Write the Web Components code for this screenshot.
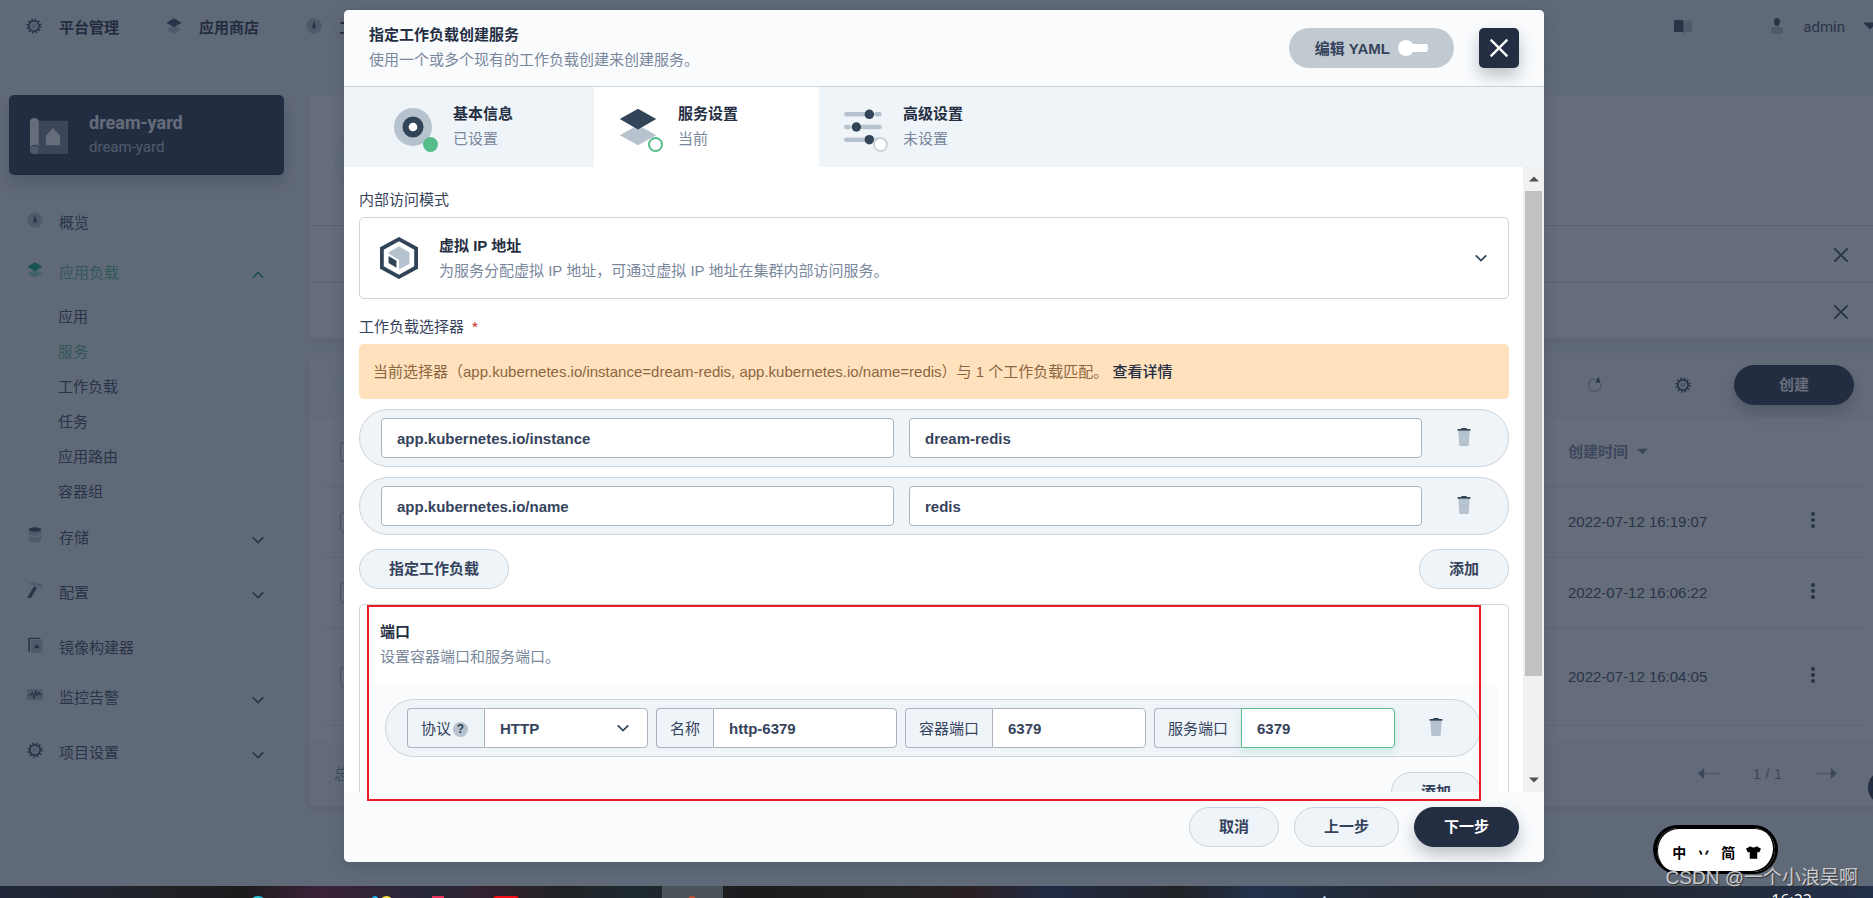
<!DOCTYPE html>
<html lang="zh-CN">
<head>
<meta charset="utf-8">
<title>KubeSphere - 服务</title>
<style>
html,body{height:100%;margin:0}
body{overflow:hidden;background:#eff4f9;font:15px/25px "Liberation Sans","Noto Sans CJK SC",sans-serif;color:#242e42}
</style>
</head>
<body>
<console-app></console-app>
<script>
const base = '*{box-sizing:border-box}button,input,select{font:inherit;color:inherit}a{color:inherit;text-decoration:none}';
function define(name, html) {
  customElements.define(name, class extends HTMLElement {
    constructor() {
      super();
      const markup = typeof html === 'function' ? html(this) : html;
      this.attachShadow({ mode: 'open' }).innerHTML = '<style>' + base + '</style>' + markup;
    }
  });
}
const attr = (el, n, d = '') => el.getAttribute(n) ?? d;

const D = 'var(--dark,#324558)', L = 'var(--light,#b6c2cd)';
const icons = {
  gear: `<circle cx="12" cy="12" r="9.7" fill="none" stroke="${D}" stroke-width="3.6" stroke-dasharray="2.3 2.78"/><circle cx="12" cy="12" r="7.6" fill="none" stroke="${D}" stroke-width="2.6"/><circle cx="12" cy="12" r="4" fill="${L}"/>`,
  layers: `<path d="M.5 17.2 12 10.8l11.5 6.4L12 23.6Z" fill="${L}"/><path d="M.5 7 12 .4 23.5 7 12 13.6Z" fill="${D}"/>`,
  gauge: `<circle cx="12" cy="12" r="11.6" fill="${L}"/><path d="M12 4 14.4 12.5a2.6 2.6 0 1 1-4.8 0Z" fill="${D}"/>`,
  database: `<path d="M2.500 4v6c0 4 19 4 19 0V4ZM2.500 12.500v7.500c0 4.500 19 4.500 19 0v-7.500c-2 3.200-17 3.200-19 0Z" fill="${L}"/><ellipse cx="12" cy="3.600" rx="9.500" ry="3.200" fill="${D}"/>`,
  hammer: `<path d="M3 3C6 .5 11-.5 15 1l5 2.500 2-1 1.500 4-3 3-3.500-3-6-1.500Z" fill="${L}"/><path d="m10.500 6.500 4.500 2L6 24H0Z" fill="${D}"/>`,
  image: `<path d="M6 4h17v20H6Z" fill="${L}"/><path d="M2 1h18v2H4.500v19H2ZM10 17l4.500-7 4.500 7Z" fill="${D}"/>`,
  monitor: `<rect y="3" width="24" height="17" rx="2" fill="${L}"/><path d="M2 12h4l2-4 2.500 8 2.500-10 2 7 3-5 1.500 3H22" fill="none" stroke="${D}" stroke-width="1.800"/>`,
  project: `<path d="M5 3h19v21H4Z" fill="${L}" opacity=".55"/><path d="M0 3a3 3 0 0 1 5.500 0v16c-3-1.500-5.500 0-5.500 2Z" fill="#fff"/><path d="M0 21.500a2.700 2.700 0 1 1 5.500 0L4 24H2a2.400 2.400 0 0 1-2-2.500Z" fill="${L}"/><path d="m14.500 7.500 4.500 5v6h-9v-6Z" fill="#fff"/>`,
  book: `<path d="M12 5h12v15H12Z" fill="${L}"/><path d="M0 4h11l1.500 1v17L11 20H0Z" fill="${D}"/>`,
  user: `<path d="M3 18c0-4 2-5 9-5s9 1 9 5v3q0 3-3 3H6q-3 0-3-3Z" fill="${L}"/><path d="M7.500 4.500c0-6 9-6 9 0C16.500 9 15 12 12 12S7.500 9 7.500 4.500Z" fill="${D}"/>`,
  refresh: `<path d="M20.500 9.500a9.300 9.300 0 1 1-7-6.400" fill="none" stroke="${L}" stroke-width="2.600"/><path d="M17.500-.5 20 8.500 12.500 8.200Z" fill="${D}"/>`,
  close: `<path d="M2 2 22 22M22 2 2 22" fill="none" stroke="${D}" stroke-width="2.800"/>`,
  down: `<path d="m3 7.500 9 9 9-9" fill="none" stroke="${D}" stroke-width="3"/>`,
  up: `<path d="m3 16.500 9-9 9 9" fill="none" stroke="${D}" stroke-width="3"/>`,
  caret: `<path d="M0 6h24L12 18Z" fill="${D}"/>`,
  more: `<g fill="${D}"><circle cx="12" cy="3" r="3"/><circle cx="12" cy="12" r="3"/><circle cx="12" cy="21" r="3"/></g>`,
  prev: `<path d="M4 12h20" stroke="${L}" stroke-width="2"/><path d="M0 12 7 5.500v13Z" fill="${D}"/>`,
  next: `<path d="M0 12h20" stroke="${L}" stroke-width="2"/><path d="M24 12 17 5.500v13Z" fill="${D}"/>`,
  trash: `<path d="M4.500 4h15l-1.200 18.500q0 1.500-2 1.500H7.700q-2 0-2-1.500Z" fill="${L}"/><path d="M3.500 1.300h5V0h7v1.300h5v2.200h-17Z" fill="${D}"/>`,
  disc: `<circle cx="12" cy="12" r="12" fill="${L}"/><circle cx="12" cy="12" r="4.700" fill="#fff" stroke="${D}" stroke-width="3.900"/>`,
  sliders: `<g stroke="${L}" stroke-width="2.800" stroke-linecap="round"><path d="M1.400 4h11.300M20.500 4h2M1.400 12h1.500M11.500 12h11M1.400 20h11.300M20.500 20h2"/></g><g fill="${D}"><circle cx="16" cy="4" r="3"/><circle cx="7.800" cy="12" r="3"/><circle cx="16" cy="20" r="3"/></g>`,
  cube: `<path d="M12 .1 22.800 6v12L12 23.900 1.200 18V6Z" fill="#fff" stroke="${D}" stroke-width="2.400"/><path d="m12 4.700 6.600 3.600v7.400L12 19.300v-6L5.400 9.200v-.9Z" fill="${L}"/><path d="m5.400 10.800 5 3v4.400l-5-3Z" fill="${D}"/>`,
  shirt: `<path d="M7 2q5 4 10 0l7 4-3 6-3-1v11H6V11l-3 1-3-6Z" fill="${D}"/>`
};
define('ks-icon', el => `<style>
:host{display:block;flex:none;width:${attr(el, 'size', 16)}px;height:${attr(el, 'size', 16)}px}
svg{display:block;width:100%;height:100%;overflow:visible}</style>
<svg viewBox="0 0 24 24" aria-hidden="true">${icons[attr(el, 'name')]}</svg>`);

define('ks-button', el => `<style>
:host{display:block;flex:none}
button{display:block;height:40px;width:100%;padding:0 28px 1px;border-radius:20px;font-weight:700;border:1px solid #ccd3db;background:#eff4f9;color:#36435c;white-space:nowrap}
:host([kind=primary]) button{border-color:#242e42;background:#242e42;color:#fff;box-shadow:0 8px 16px rgba(36,46,66,.28)}
</style><button type="button"><slot></slot></button>`);

define('top-bar', `<style>
:host{display:block}
header{display:flex;align-items:center;height:69px;padding:0 0 13px 26px;border-bottom:1px solid;border-image:linear-gradient(90deg,transparent 12%,#e3e9ef 30%,#e3e9ef 80%,transparent 95%) 1}
nav{display:flex;flex:1}
a{display:flex;gap:17px;align-items:center;white-space:nowrap;font-weight:700;color:#242e42}
nav a{min-width:140px}
ks-icon{margin-bottom:4px}
.doc{margin-right:77px}
button{display:flex;align-items:center;gap:18px;border:0;background:none;padding:0;font:15px/25px Roboto,sans-serif;color:#36435c;margin-right:-4px}
</style><header><nav aria-label="主导航">
<a href="#"><ks-icon name="gear"></ks-icon>平台管理</a>
<a href="#"><ks-icon name="layers"></ks-icon>应用商店</a>
<a href="#"><ks-icon name="gauge"></ks-icon>工作台</a></nav>
<a class="doc" href="#" aria-label="文档"><ks-icon name="book" size="18"></ks-icon></a>
<button type="button"><ks-icon name="user"></ks-icon>admin<ks-icon name="caret" size="14"></ks-icon></button></header>`);

define('nav-item', el => `<style>
:host{display:block}
a{display:flex;align-items:center;height:50px;padding:0 19px 2px 18px;color:#36435c}
:host([expand]) a{margin-bottom:5px}
:host([active]) a{color:#55bc8a;margin:0}
:host([active]){--dark:#00aa72;--light:#90e0c5}
span{flex:1;margin-left:16px}
.lead{margin-bottom:4px}.tail{margin:5px 0 0}
</style><a href="#"><ks-icon class="lead" name="${attr(el, 'icon')}"></ks-icon><span><slot></slot></span>${el.hasAttribute('active') ? '<ks-icon class="tail" name="up" size="14"></ks-icon>' : el.hasAttribute('expand') ? '<ks-icon class="tail" name="down" size="14"></ks-icon>' : ''}</a>`);

define('side-nav', `<style>
:host{display:block;flex:none;width:275px}
.card{display:flex;align-items:center;gap:21px;height:80px;padding:0 21px;border-radius:5px;background:#242e42;color:#b6c2cd;font-family:Roboto,sans-serif;box-shadow:0 8px 16px rgba(36,46,66,.25);margin-bottom:23px}
.card div{display:grid}
strong{font-size:18px;color:#fff}
ul{list-style:none;margin:0;padding:1px 0 4px 49px}
li{height:35px;line-height:35px;color:#36435c}
.on{color:#55bc8a}
</style>
<div class="card"><ks-icon name="project" size="38"></ks-icon><div><strong>dream-yard</strong><span>dream-yard</span></div></div>
<nav aria-label="项目导航">
<nav-item icon="gauge">概览</nav-item>
<nav-item icon="layers" active>应用负载</nav-item>
<ul><li><a href="#">应用</a></li><li class="on"><a href="#">服务</a></li><li><a href="#">工作负载</a></li><li><a href="#">任务</a></li><li><a href="#">应用路由</a></li><li><a href="#">容器组</a></li></ul>
<nav-item icon="database" expand>存储</nav-item>
<nav-item icon="hammer" expand>配置</nav-item>
<nav-item icon="image">镜像构建器</nav-item>
<nav-item icon="monitor" expand>监控告警</nav-item>
<nav-item icon="gear" expand>项目设置</nav-item></nav>`);

define('page-intro', `<style>
:host{display:block;border-radius:5px 0 0 5px;background:#fff;box-shadow:0 4px 8px rgba(36,46,66,.08)}
.hero{height:130px;padding:28px 25px}
.hero i{display:block;width:75px;height:75px;border-radius:50%;background:#eff4f9}
.tip{display:flex;align-items:center;justify-content:flex-end;height:57px;padding:2px 24px 0 0;border-top:1px solid #d5dce4}
.tip:last-child{height:56px}
button{border:0;background:none;padding:0}
</style><div class="hero"><i></i></div>
<div class="tip"><button type="button" aria-label="关闭"><ks-icon name="close"></ks-icon></button></div>
<div class="tip"><button type="button" aria-label="关闭"><ks-icon name="close"></ks-icon></button></div>`);

define('service-list', `<style>
:host{display:block;border-radius:5px 0 0 5px;background:#fff;box-shadow:0 4px 8px rgba(36,46,66,.1);overflow:hidden}
.bar{display:flex;align-items:center;justify-content:flex-end;height:65px;padding:0 19px 0 25px;background:#f9fbfd;border-bottom:1px solid #eff4f9}
.search{width:200px;height:40px;border-radius:20px;background:#eff4f9;margin:0 auto 0 0;border:0}
.bar button{border:0;background:none;padding:0;margin-right:72px}
.bar .gear{margin-right:43px}
.bar ks-button{width:120px}
.wrap{padding:0 9px 0 15px}
table{width:100%;border-collapse:collapse;table-layout:fixed}
th,td{padding:0;text-align:left;border-bottom:1px solid #e3e9ef;font-weight:400;color:#36435c}
th{font-weight:700;color:#79879c;height:68px}
td{height:71px}
.tall td{height:97px}
.time{width:230px}.act{width:66px}
.act button{display:grid;place-items:center;width:30px;height:30px;border:0;background:none;padding:0 0 3px}
input{appearance:none;display:block;width:20px;height:20px;margin:0 0 0 16px;border:1px solid #abb4be;border-radius:3px}
th span{display:flex;align-items:center;gap:9px;--dark:#79879c}
footer{display:flex;align-items:center;height:65px;margin-top:15px;padding:0 36px 0 25px;background:#f9fbfd;color:#79879c;--dark:#79879c}
footer p{margin:0 auto 0 0}
footer button{border:0;background:none;padding:0}
footer span{margin:0 34px}
</style>
<div class="bar"><input class="search" aria-label="搜索"><button type="button" aria-label="刷新"><ks-icon name="refresh"></ks-icon></button><button class="gear" type="button" aria-label="自定义列"><ks-icon name="gear"></ks-icon></button><ks-button kind="primary">创建</ks-button></div>
<div class="wrap"><table>
<thead><tr><th><input type="checkbox" aria-label="全选"></th><th class="time"><span>创建时间<ks-icon name="caret" size="11"></ks-icon></span></th><th class="act"></th></tr></thead>
<tbody>
<tr><td><input type="checkbox" aria-label="选择"></td><td>2022-07-12 16:19:07</td><td class="act"><button type="button" aria-label="更多"><ks-icon name="more"></ks-icon></button></td></tr>
<tr><td><input type="checkbox" aria-label="选择"></td><td>2022-07-12 16:06:22</td><td class="act"><button type="button" aria-label="更多"><ks-icon name="more"></ks-icon></button></td></tr>
<tr class="tall"><td><input type="checkbox" aria-label="选择"></td><td>2022-07-12 16:04:05</td><td class="act"><button type="button" aria-label="更多"><ks-icon name="more"></ks-icon></button></td></tr>
</tbody></table></div>
<footer><p>总</p><button type="button" aria-label="上一页"><ks-icon name="prev" size="21"></ks-icon></button><span>1 / 1</span><button type="button" aria-label="下一页"><ks-icon name="next" size="21"></ks-icon></button></footer>`);

define('step-tab', el => `<style>
:host{display:flex;width:225px;height:80px;padding:14px 25px;gap:21px;align-items:flex-start}
:host([state=current]){background:#fff}
.pic{position:relative;margin-top:7px}
i{position:absolute;right:-6px;bottom:-6px;width:15px;height:15px;border-radius:50%;background:#fff;border:2px solid #ccd3db}
:host([state=done]) i{background:#55bc8a;border-color:#55bc8a}
:host([state=current]) i{border-color:#55bc8a}
strong,span{display:block;white-space:nowrap}
span{color:#79879c}
</style><div class="pic"><ks-icon name="${attr(el, 'icon')}" size="38"></ks-icon><i></i></div>
<div><strong>${attr(el, 'label')}</strong><span><slot></slot></span></div>`);

const fieldCss = `input,select{appearance:none;flex:1;min-width:0;width:100%;height:40px;margin:0;padding:0 15px;border:1px solid #abb4be;border-radius:4px;background:#fff;font-weight:700;color:#36435c;outline:0}`;
const rowCss = `:host{display:flex;height:58px;padding:0 21px;align-items:center;border:1px solid #ccd3db;border-radius:29px;background:#eff4f9}
.del{display:grid;place-items:center;flex:none;width:40px;height:40px;border:0;background:none;padding:0 0 2px}`;

define('label-row', el => `<style>${rowCss}${fieldCss}
input{flex:1;margin-right:15px}.del{margin:0 3px 0 7px}</style>
<input aria-label="键" value="${attr(el, 'key')}"><input aria-label="值" value="${attr(el, 'value')}">
<button class="del" type="button" aria-label="删除"><ks-icon name="trash" size="18"></ks-icon></button>`);

define('port-row', `<style>${rowCss}${fieldCss}
:host{gap:8px}
label{display:flex;flex:1;min-width:0;height:40px}
label>span{display:flex;align-items:center;flex:none;padding:0 13px;border:1px solid #abb4be;border-right:0;border-radius:4px 0 0 4px;white-space:nowrap;color:#36435c}
input,select{border-radius:0 4px 4px 0}
.q{width:15px;height:15px;margin:2px 3px 0 2px;border-radius:50%;background:#b6c2cd;color:#324558;font-weight:700;font-size:12px;line-height:15px;text-align:center}
.sel{position:relative;flex:1;display:flex}
.sel ks-icon{position:absolute;right:18px;top:13px}
.focus{border-color:#55bc8a;box-shadow:0 4px 8px rgba(85,188,138,.2)}
.del{margin:0 3px 0 13px}
</style>
<label><span>协议<b class="q">?</b></span><div class="sel"><select><option>HTTP</option></select><ks-icon name="down" size="14"></ks-icon></div></label>
<label><span>名称</span><input value="http-6379"></label>
<label><span>容器端口</span><input value="6379"></label>
<label><span>服务端口</span><input class="focus" value="6379"></label>
<button class="del" type="button" aria-label="删除"><ks-icon name="trash" size="18"></ks-icon></button>`);

define('scroll-rail', `<style>
:host{display:flex;flex-direction:column;flex:none;width:21px;background:#f1f1f1;--dark:#505050}
button{display:grid;place-items:center;height:24px;border:0;padding:0;background:none}
.up ks-icon{rotate:180deg}
i{flex:0 0 84%;margin:0 2px;background:#c1c1c1}
.run{flex:1;display:flex;flex-direction:column}
</style><button class="up" type="button" aria-label="向上滚动"><ks-icon name="caret" size="10"></ks-icon></button><div class="run"><i></i></div><button type="button" aria-label="向下滚动"><ks-icon name="caret" size="10"></ks-icon></button>`);

define('service-form', `<style>
:host{display:block;flex:1;min-width:0;padding:20px 14px 0 15px;overflow:hidden}
.cap{display:block;color:#36435c;margin-bottom:5px}
.cap b{color:#ca2621;margin-left:8px;font-weight:400}
.mode{display:flex;align-items:center;gap:21px;width:100%;height:82px;padding:0 20px;margin-bottom:15px;border:1px solid #ccd3db;border-radius:5px;background:#fff;text-align:left}
.mode>span{flex:1}
.mode strong,.mode small{display:block;font-size:15px;line-height:25px;color:#242e42}
.mode small,.desc{color:#79879c}
.alert{margin:0 0 10px;padding:15px 14px;border-radius:5px;background:#ffe1be;color:#8d663e}
.alert a{color:#242e42;font-weight:500}
label-row{margin-bottom:10px}
.acts{display:flex;justify-content:space-between;margin:14px 0 15px}
.wide{width:150px}.std{width:90px}
.ports{border:1px solid #ccd3db;border-radius:5px;padding:14px 10px}
p{margin:0}
.head{padding:0 10px}
.list{margin-top:15px;padding:15px 17px 14px 15px;border-radius:5px;background:#f9fbfd}
.list ks-button{margin:15px 0 0 auto}
</style>
<span class="cap">内部访问模式</span>
<button class="mode" type="button" aria-haspopup="listbox"><ks-icon name="cube" size="38"></ks-icon><span><strong>虚拟 IP 地址</strong><small>为服务分配虚拟 IP 地址，可通过虚拟 IP 地址在集群内部访问服务。</small></span><ks-icon name="down" size="14"></ks-icon></button>
<span class="cap">工作负载选择器<b>*</b></span>
<p class="alert">当前选择器（app.kubernetes.io/instance=dream-redis, app.kubernetes.io/name=redis）与 1 个工作负载匹配。 <a href="#">查看详情</a></p>
<label-row key="app.kubernetes.io/instance" value="dream-redis"></label-row>
<label-row key="app.kubernetes.io/name" value="redis"></label-row>
<div class="acts"><ks-button class="wide">指定工作负载</ks-button><ks-button class="std">添加</ks-button></div>
<section class="ports"><div class="head"><strong>端口</strong><p class="desc">设置容器端口和服务端口。</p></div>
<div class="list"><port-row></port-row><ks-button class="std">添加</ks-button></div></section>`);

define('service-dialog', `<style>
:host{display:flex;flex-direction:column;position:relative;width:1200px;max-width:100%;height:100%;border-radius:5px;background:#fff;box-shadow:0 4px 16px rgba(36,46,66,.2)}
header{display:flex;align-items:center;gap:25px;height:77px;padding:0 25px;background:#f9fbfd;border-bottom:1px solid #ccd3db;border-radius:5px 5px 0 0}
header div{flex:1;padding-bottom:2px}
h1,p{margin:0;font-size:15px;line-height:25px}
p{color:#79879c}
.yaml{display:flex;align-items:center;gap:8px;height:40px;padding:0 26px;border-radius:20px;background:#c1c9d1;font-weight:700;color:#36435c}
.yaml input{appearance:none;position:relative;width:30px;height:16px;margin:0;border-radius:8px;background:linear-gradient(#fff,#fff) 8px 4px/22px 8px no-repeat}
.yaml input::before{content:"";position:absolute;left:0;top:0;width:16px;height:16px;border-radius:50%;background:#fff}
.close{display:grid;place-items:center;width:40px;height:40px;border:0;border-radius:5px;background:#242e42;--dark:#fff;box-shadow:0 8px 16px rgba(36,46,66,.28);padding:0}
.tabs{display:flex;padding-left:25px;background:#eff4f9}
.body{display:flex;flex:1;min-height:0}
footer{display:flex;justify-content:flex-end;gap:15px;padding:15px 25px;background:#f9fbfd;border-radius:0 0 5px 5px}
.s{width:90px}.m{width:105px}
.mark{position:absolute;left:23px;right:63px;bottom:61px;height:196px;border:2px solid #ed1c24;pointer-events:none}
</style>
<header><div><h1>指定工作负载创建服务</h1><p>使用一个或多个现有的工作负载创建来创建服务。</p></div>
<label class="yaml">编辑 YAML<input type="checkbox" role="switch"></label>
<button class="close" type="button" aria-label="关闭"><ks-icon name="close" size="20"></ks-icon></button></header>
<div class="tabs"><step-tab icon="disc" label="基本信息" state="done">已设置</step-tab><step-tab icon="layers" label="服务设置" state="current">当前</step-tab><step-tab icon="sliders" label="高级设置">未设置</step-tab></div>
<div class="body"><service-form></service-form><scroll-rail></scroll-rail></div>
<footer><ks-button class="s">取消</ks-button><ks-button class="m">上一步</ks-button><ks-button class="m" kind="primary">下一步</ks-button></footer>
<div class="mark"></div>`);

define('ime-badge', `<style>
:host{display:flex;align-items:center;justify-content:space-around;width:125px;height:49px;padding:4px 9px 0 10px;border:solid #000;border-width:3px 3px 2px 4px;border-radius:25px;background:#fff;box-shadow:inset -2px -1px 0 #000,inset 1px 1px 0 #000;color:#000;font:700 14px/20px "Noto Sans CJK SC",sans-serif;--dark:#000}
</style><span>中</span><span>丷</span><span>简</span><ks-icon name="shirt" size="15"></ks-icon>`);

define('task-bar', `<style>
:host{display:block;position:relative;height:12px;overflow:hidden;background:linear-gradient(90deg,#20273a,#202226 9%,#1c1c1e 13%,#3c2238 17%,#262838 23%,#33212f 26%,#202226 30%,#1e2a30 34%,#1c1c1e 40%,#232225 48%,#2a2024 52%,#222b45 56%,#202226 63%,#24324c 67%,#22262c 77%,#22262c 82%,#243049)}
i{position:absolute;top:10px;height:17px;border-radius:50%}
.win{top:0;height:12px;left:662px;width:61px;border-radius:0;background:#4b535b}
time{position:absolute;right:61px;top:4px;color:#fff;font:16px/20px "Open Sans",sans-serif}
</style><i class="win"></i>
<i style="left:249px;width:18px;background:#27c4dc"></i><i style="left:370px;width:10px;background:#1fb6e8"></i><i style="left:379px;width:15px;background:#f4e63c"></i><i style="left:432px;width:12px;background:#e8315b;border-radius:0"></i><i style="left:492px;width:28px;background:#f20d17;border-radius:5px"></i><i style="left:686px;width:12px;background:#d34b32"></i><i style="left:1322px;width:5px;background:#b9d6ee"></i><time>16:22</time>`);

define('console-app', `<style>
:host{display:flex;flex-direction:column;height:100vh;position:relative;overflow:hidden}
.page{flex:1;min-height:0;overflow:hidden;position:relative}
main{display:flex;gap:25px;padding:26px 0 0 9px}
.content{flex:1;min-width:0;display:flex;flex-direction:column;gap:15px}
.help{position:absolute;right:-30px;bottom:81px;width:35px;height:35px;border-radius:50%;background:#242e42;border:0}
.mask{position:absolute;inset:0;display:flex;justify-content:center;padding:10px 0 24px 15px;background:rgba(36,46,66,.7)}
ime-badge{position:absolute;right:95px;bottom:24px}
.sign{position:absolute;right:15px;bottom:6px;font-size:19px;line-height:28px;color:#c9ccd1;text-shadow:1px 1px 1px #333;white-space:nowrap}
</style>
<div class="page"><top-bar></top-bar><main><side-nav></side-nav><div class="content"><page-intro></page-intro><service-list></service-list></div></main>
<button class="help" type="button" aria-label="帮助"></button>
<div class="mask"><service-dialog role="dialog" aria-label="指定工作负载创建服务"></service-dialog></div></div>
<task-bar></task-bar><ime-badge></ime-badge><span class="sign">CSDN @一个小浪吴啊</span>`);
</script>
</body>
</html>
